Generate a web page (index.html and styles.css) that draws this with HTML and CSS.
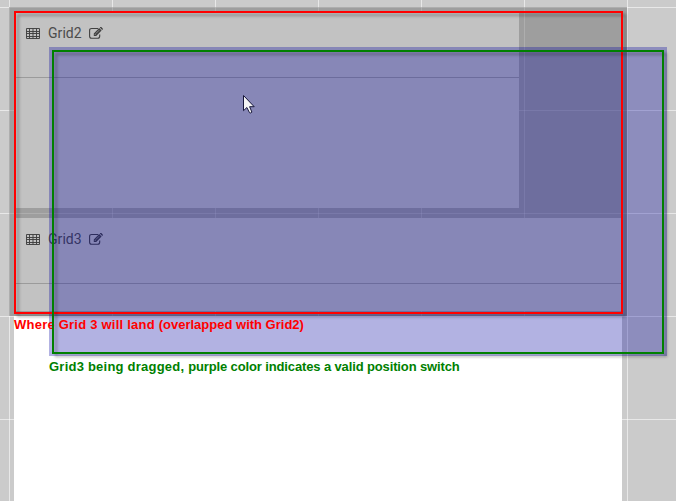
FILE: index.html
```html
<!DOCTYPE html>
<html lang="en">
<head>
<meta charset="utf-8">
<title>Grid designer</title>
<link rel="stylesheet" href="styles.css">
</head>
<body>
<svg class="defs" aria-hidden="true">
  <symbol id="table" viewBox="0 0 14 11"><path d="M.5.5h13v10H.5zM.5 3.5h13M.5 5.5h13M.5 8.5h13M3.5.5v10M7 .5v10M10.5.5v10" fill="none" stroke="currentColor" stroke-width=".95"/></symbol>
  <symbol id="edit" viewBox="0 0 14 12"><path d="M9.2 1.5H2.6Q.6 1.5.6 3.5v5.8q0 2 2 2h6.1q2 0 2-2V7.6" fill="none" stroke="currentColor" stroke-width="1.1"/><path d="M4.8 6.5 10.2 1.1 12.6 3.5 7.2 8.9H4.8zM10.8.6l.5-.5q.5-.4 1 0l1.4 1.4q.4.5 0 1l-.5.5z" fill="currentColor"/><path d="m6.8 6.6 3.4-3.4M5.7 7l1 1" stroke="#c2c2c2" stroke-width=".6"/></symbol>
</svg>
<main class="canvas">
  <div class="page"></div>
  <div class="gridlines"></div>
  <section class="container">
    <article class="panel panel-small">
      <header><svg class="table"><use href="#table"/></svg><span>Grid2</span><svg class="edit"><use href="#edit"/></svg></header>
    </article>
    <article class="panel panel-wide">
      <header><svg class="table"><use href="#table"/></svg><span>Grid3</span><svg class="edit"><use href="#edit"/></svg></header>
    </article>
  </section>
  <div class="ghost"></div>
  <svg class="cursor" viewBox="0 0 13 21"><path d="M1.5 1.5v15.2l3.4-3.2 2.6 5.2q1.2.8 2.4-.6L7.6 12.7h4.6z" fill="#f5f5f5" stroke="#17173a" stroke-width="1"/></svg>
  <div class="outline landing"></div>
  <p class="note landing-note"><span class="loose">Where Grid 3 will land </span>(overlapped with Grid2)</p>
  <div class="outline dragging"></div>
  <p class="note dragging-note"><span class="loose">Grid3 being dragged, </span><span class="snug">purple color indicates a valid position switch</span></p>
</main>
</body>
</html>
```

FILE: styles.css
```css
* { box-sizing: border-box; }
body { margin: 0; overflow: hidden; }
.defs { position: absolute; width: 0; height: 0; }
.canvas { position: relative; width: 676px; height: 501px; overflow: hidden; background: #cbcbcb; }
.page { position: absolute; left: 14px; top: 12px; width: 608px; height: 489px; background: #fff; }
.gridlines {
  position: absolute; inset: 0;
  background:
    linear-gradient(90deg, rgba(255,255,255,.55) 1px, transparent 1px) 9px 0 / 103px 103px,
    linear-gradient(rgba(255,255,255,.55) 1px, transparent 1px) 0 7px / 103px 103px;
}
.container {
  position: absolute; left: 9px; top: 7px; width: 618px; height: 309px;
  padding: 5px;
  display: flex; flex-direction: column; gap: 10px;
  background:
    linear-gradient(90deg, rgba(255,255,255,.16) 1px, transparent 1px) 0 0 / 103px 103px,
    linear-gradient(rgba(255,255,255,.16) 1px, transparent 1px) 0 0 / 103px 103px,
    #9e9e9e;
  background-position: 0 0, 0 0;
}
.panel { background: #c2c2c2; }
.panel-small { width: 505px; height: 196px; }
.panel-wide { width: 608px; height: 93px; }
.panel header {
  height: 66px; padding: 11px 12px 0;
  display: flex; align-items: flex-start;
  border-bottom: 1px solid #9b9b9b;
  color: #4c4c4c; font: 14px/20px Roboto, sans-serif;
}
.panel header span { width: 33px; margin: 0 8px; letter-spacing: .05px; }
.panel .table { width: 14px; height: 11px; margin-top: 5px; color: #404040; }
.panel .edit { width: 14px; height: 12px; margin-top: 4px; color: #404040; }
.ghost { position: absolute; left: 49px; top: 47px; width: 618px; height: 309px; background: rgba(0,0,160,.3); }
.cursor { position: absolute; left: 242px; top: 94px; width: 13px; height: 21px; }
.outline { position: absolute; border: 2px solid; filter: drop-shadow(3px 3px 1.5px rgba(0,0,0,.3)); }
.landing { left: 14px; top: 11px; width: 609px; height: 303px; border-color: #f00; }
.dragging { left: 52px; top: 50px; width: 612px; height: 304px; border-color: #008000; }
.note { position: absolute; margin: 0; white-space: nowrap; font: bold 13px/16px "Liberation Sans", Arial, sans-serif; }
.loose { letter-spacing: .23px; }
.snug { letter-spacing: -.13px; }
.landing-note { left: 14px; top: 317px; color: #f00; }
.dragging-note { left: 49px; top: 359px; color: #008000; }
```
